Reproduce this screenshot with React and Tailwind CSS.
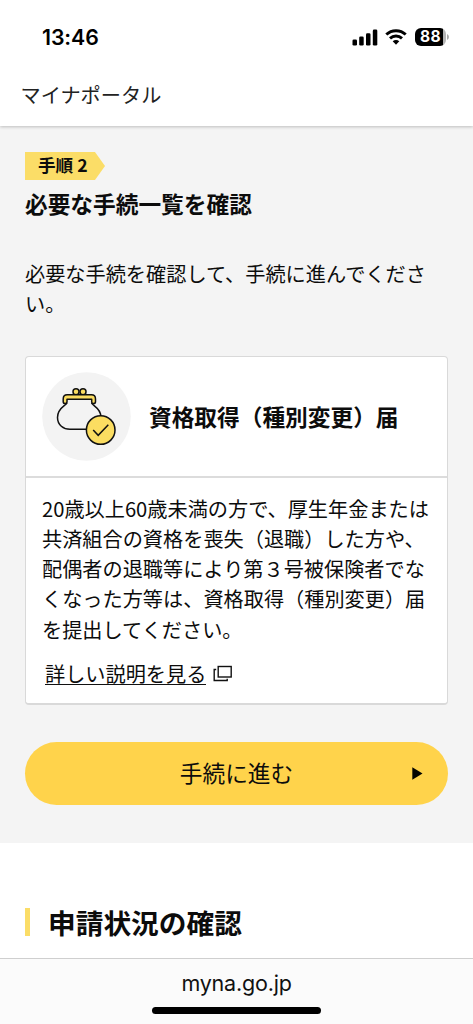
const descriptionLines = [
  '20歳以上60歳未満の方で、厚生年金または',
  '共済組合の資格を喪失（退職）した方や、',
  '配偶者の退職等により第３号被保険者でな',
  'くなった方等は、資格取得（種別変更）届',
  'を提出してください。',
];

function StatusBar() {
  return (
    <div className="flex h-[74px] items-center justify-between pl-[42px] pr-[24px] font-['Inter',sans-serif] text-black">
      <span className="pt-px text-[21.3px] font-semibold leading-none tracking-[-0.1px]">13:46</span>
      <div className="flex items-center">
        <svg className="h-[17px] w-[26px]" viewBox="0 0 26 17" fill="currentColor">
          <rect x="0.5" y="10.5" width="4.5" height="6" rx="1.3" />
          <rect x="7.2" y="7.5" width="4.5" height="9" rx="1.3" />
          <rect x="14" y="4.2" width="4.5" height="12.3" rx="1.3" />
          <rect x="20.8" y="0.6" width="4.5" height="15.9" rx="1.3" />
        </svg>
        <svg className="ml-[7px] h-[16px] w-[22px]" viewBox="0 0 22 16" fill="none" stroke="currentColor" strokeWidth="2.9">
          <path d="M1.3 5.5C6.7 .4 15.3 .4 20.7 5.5" />
          <path d="M5 9.4C8.4 6.2 13.6 6.2 17 9.4" />
          <path d="M11 15.7 7.7 12.3C9.6 10.7 12.4 10.7 14.3 12.3Z" fill="currentColor" stroke="none" />
        </svg>
        <div className="ml-[8px] flex h-[18px] w-[31px] items-center justify-center rounded-[6px] bg-[linear-gradient(90deg,#000_28px,#b5b5b5_28px)] text-[15.5px] font-bold leading-none text-white">
          <span className="tracking-[0.3px]">88</span>
        </div>
        <svg className="ml-px h-[6px] w-[2px]" viewBox="0 0 2 6"><path d="M0 0Q2 .8 2 3T0 6Z" fill="#a9a9a9" /></svg>
      </div>
    </div>
  );
}

function PurseIcon() {
  return (
    <svg className="h-[89px] w-[89px] shrink-0" viewBox="0 0 89 89" fill="none" stroke="#111" strokeWidth="1.5" strokeLinejoin="round">
      <circle cx="44.5" cy="44.5" r="44.3" fill="#f3f3f3" stroke="none" />
      <path d="M25 31C23.5 34 15.5 36 15.5 45.5C15.5 53 21.5 57.3 28 57.3H46C53 57.3 58.8 52 58.8 44.5C58.8 36 51 34 49.5 31" />
      <circle cx="34" cy="19.7" r="3" fill="#fbdd61" />
      <circle cx="41" cy="19.7" r="3" fill="#fbdd61" />
      <path d="M25.2 22.8H49.5Q53.5 22.8 53.5 27V29.8Q53.5 31.6 51.6 31.6T49.7 29.8V27.3H25V29.8Q25 31.6 23.1 31.6T21.2 29.8V27Q21.2 22.8 25.2 22.8Z" fill="#fbdd61" />
      <circle cx="58.7" cy="58" r="14.3" fill="#fbdd61" />
      <path d="M51.2 58 56.2 63.3 66.3 52.8" strokeLinejoin="miter" />
    </svg>
  );
}

function ProcedureCard() {
  return (
    <article className="mt-[36px] h-[349px] rounded-[4px] border border-b-2 border-[#d9d9d9] bg-white">
      <div className="flex h-[121px] items-center border-b-2 border-[#dcdcdc] pl-[16px] pt-px">
        <PurseIcon />
        <h2 className="ml-[18px] whitespace-nowrap pt-px text-[22.7px] font-bold leading-[34px]">資格取得（種別変更）届</h2>
      </div>
      <div className="pl-[16px] pt-[16px]">
        <p className="text-[20.18px] leading-[30.27px]">
          {descriptionLines.map((line) => (
            <span key={line} className="block whitespace-nowrap">{line}</span>
          ))}
        </p>
        <a className="ml-[3px] mt-[18px] flex items-center">
          <span className="border-b-[1.5px] border-[#111] text-[20.18px] leading-[21px]">詳しい説明を見る</span>
          <svg className="ml-[7px] h-[17px] w-[20px]" viewBox="0 0 20 17" fill="none" stroke="#111" strokeWidth="1.4">
            <rect x="5.2" y="1.5" width="13" height="10.5" />
            <path d="M3.2 4.5H1.2V15.5H14.2V13.8" />
          </svg>
        </a>
      </div>
    </article>
  );
}

export default function App() {
  return (
    <div className="flex h-[1024px] w-full flex-col overflow-hidden bg-white font-['Noto_Sans_CJK_JP',sans-serif] text-[#0c0c0c]">
      <header className="z-10 h-[126px] shrink-0 bg-white shadow-[0_1px_3px_rgba(0,0,0,0.22)]">
        <StatusBar />
        <div className="flex h-[42px] items-center pl-[20.5px] text-[20.18px] leading-[30px] text-[#222]">マイナポータル</div>
      </header>
      <main className="h-[717px] shrink-0 bg-[#f4f4f4] px-[25px] pt-[26px]">
        <div className="flex h-[28px] w-[80px] items-center bg-[#fbdd67] pb-[2px] pl-[13px] text-[17.6px] font-bold leading-none [clip-path:polygon(0_0,70px_0,100%_50%,70px_100%,0_100%)]">
          <span className="whitespace-nowrap">手順 2</span>
        </div>
        <h1 className="mt-[7px] text-[22.7px] font-bold leading-[34px]">必要な手続一覧を確認</h1>
        <p className="mt-[38px] text-[20.18px] leading-[30.27px]">
          <span className="block whitespace-nowrap">必要な手続を確認して、手続に進んでくださ</span>
          <span className="block">い。</span>
        </p>
        <ProcedureCard />
        <button className="mt-[37px] flex h-[63px] w-full items-center rounded-full bg-[#ffd34b] pl-[36px] pr-[25px] text-[22.7px]">
          <span className="flex-1 text-center">手続に進む</span>
          <svg className="h-[13px] w-[11px]" viewBox="0 0 11 13"><path d="M.3.2 10.5 6.5.3 12.8Z" fill="#050500" /></svg>
        </button>
      </main>
      <section className="flex h-[115px] shrink-0 items-start pl-[25px] pt-[65px]">
        <div className="h-[28px] w-[5px] bg-[#fbdd67]" />
        <h2 className="ml-[18px] text-[27.7px] font-bold leading-[28px]">申請状況の確認</h2>
      </section>
      <footer className="flex flex-1 flex-col items-center border-t border-[#cfcfcf] bg-[#fbfbfb] pt-[10px]">
        <span className="font-['Inter',sans-serif] text-[21.5px] leading-[28px] tracking-[-0.2px] text-[#111]">myna.go.jp</span>
        <div className="mt-[10px] h-[7px] w-[169px] rounded-full bg-black" />
      </footer>
    </div>
  );
}
